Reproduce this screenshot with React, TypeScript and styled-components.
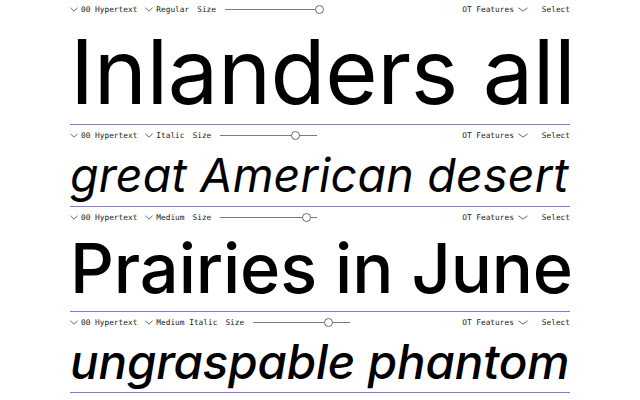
import React from "react";
import styled, { createGlobalStyle } from "styled-components";

const GlobalStyle = createGlobalStyle`
  html, body {
    margin: 0;
    padding: 0;
    background: #ffffff;
  }
  body {
    font-family: "Inter", "Liberation Sans", sans-serif;
    color: #000;
  }
`;

const Page = styled.div`
  width: 640px;
  height: 400px;
  overflow: hidden;
  display: flex;
  flex-direction: column;
  align-items: center;
`;

const Column = styled.div`
  width: 500px;
  display: flex;
  flex-direction: column;
`;

const Block = styled.section<{ $first?: boolean }>`
  display: flex;
  flex-direction: column;
  border-bottom: 1px solid #8679e0;
  padding-top: ${(p) => (p.$first ? "0" : "1px")};
`;

const Controls = styled.div`
  height: 19px;
  display: flex;
  align-items: center;
  font-family: "DejaVu Sans Mono", "Liberation Mono", monospace;
  font-size: 7.8px;
  color: #222;
`;

const Group = styled.div`
  display: flex;
  align-items: center;
`;

const Dropdown = styled.div`
  display: flex;
  align-items: center;
  gap: 3px;
  margin-right: 8px;
`;

const Label = styled.span`
  margin-right: 9px;
`;

const Spacer = styled.div`
  flex: 1;
`;

const Track = styled.div`
  position: relative;
  width: 97px;
  height: 9px;
  display: flex;
  align-items: center;

  &::before {
    content: "";
    display: block;
    width: 100%;
    height: 1px;
    background: #7a7a7a;
  }
`;

const Knob = styled.span`
  position: absolute;
  top: 0;
  width: 7px;
  height: 7px;
  margin-left: -4px;
  border: 1px solid #6a6a6a;
  border-radius: 50%;
  background: #fff;
`;

const Right = styled.div`
  display: flex;
  align-items: center;
  gap: 4px;
`;

const Select = styled.span`
  margin-left: 10px;
`;

const Sample = styled.div<{ $size: number; $height: number; $italic?: boolean; $track: number; $weight: number }>`
  height: ${(p) => p.$height}px;
  line-height: ${(p) => p.$height}px;
  font-size: ${(p) => p.$size}px;
  font-style: ${(p) => (p.$italic ? "italic" : "normal")};
  font-weight: ${(p) => p.$weight};
  letter-spacing: ${(p) => p.$track}em;
  white-space: nowrap;
  color: #000;
`;

const Chevron = ({ w = 8 }: { w?: number }) => (
  <svg width={w} height="5" viewBox={`0 0 ${w} 5`} fill="none">
    <path d={`M0.5 0.8 L${w / 2} 4.2 L${w - 0.5} 0.8`} stroke="#555" strokeWidth="0.9" />
  </svg>
);

interface Spec {
  style: string;
  value: number;
  text: string;
  size: number;
  height: number;
  italic?: boolean;
  weight: number;
  track: number;
}

const specs: Spec[] = [
  { style: "Regular", value: 97, text: "Inlanders all", size: 90, height: 105, weight: 400, track: -0.005 },
  { style: "Italic", value: 77, text: "great American desert", size: 46.5, height: 61, italic: true, weight: 400, track: 0.005 },
  { style: "Medium", value: 88, text: "Prairies in June", size: 68.5, height: 84, weight: 500, track: -0.002 },
  { style: "Medium Italic", value: 77, text: "ungraspable phantom", size: 47.5, height: 60, italic: true, weight: 500, track: -0.003 },
];

const Specimen = ({ spec, first }: { spec: Spec; first?: boolean }) => (
  <Block $first={first}>
    <Controls>
      <Group>
        <Dropdown>
          <Chevron />
          <span>00 Hypertext</span>
        </Dropdown>
        <Dropdown>
          <Chevron />
          <span>{spec.style}</span>
        </Dropdown>
        <Label>Size</Label>
        <Track>
          <Knob style={{ left: `${spec.value}%` }} />
        </Track>
      </Group>
      <Spacer />
      <Right>
        <span>OT Features</span>
        <Chevron w={10} />
        <Select>Select</Select>
      </Right>
    </Controls>
    <Sample
      $size={spec.size}
      $height={spec.height}
      $italic={spec.italic}
      $weight={spec.weight}
      $track={spec.track}
    >
      {spec.text}
    </Sample>
  </Block>
);

export default function App() {
  return (
    <Page>
      <GlobalStyle />
      <Column>
        {specs.map((s, i) => (
          <Specimen key={s.style} spec={s} first={i === 0} />
        ))}
      </Column>
    </Page>
  );
}
